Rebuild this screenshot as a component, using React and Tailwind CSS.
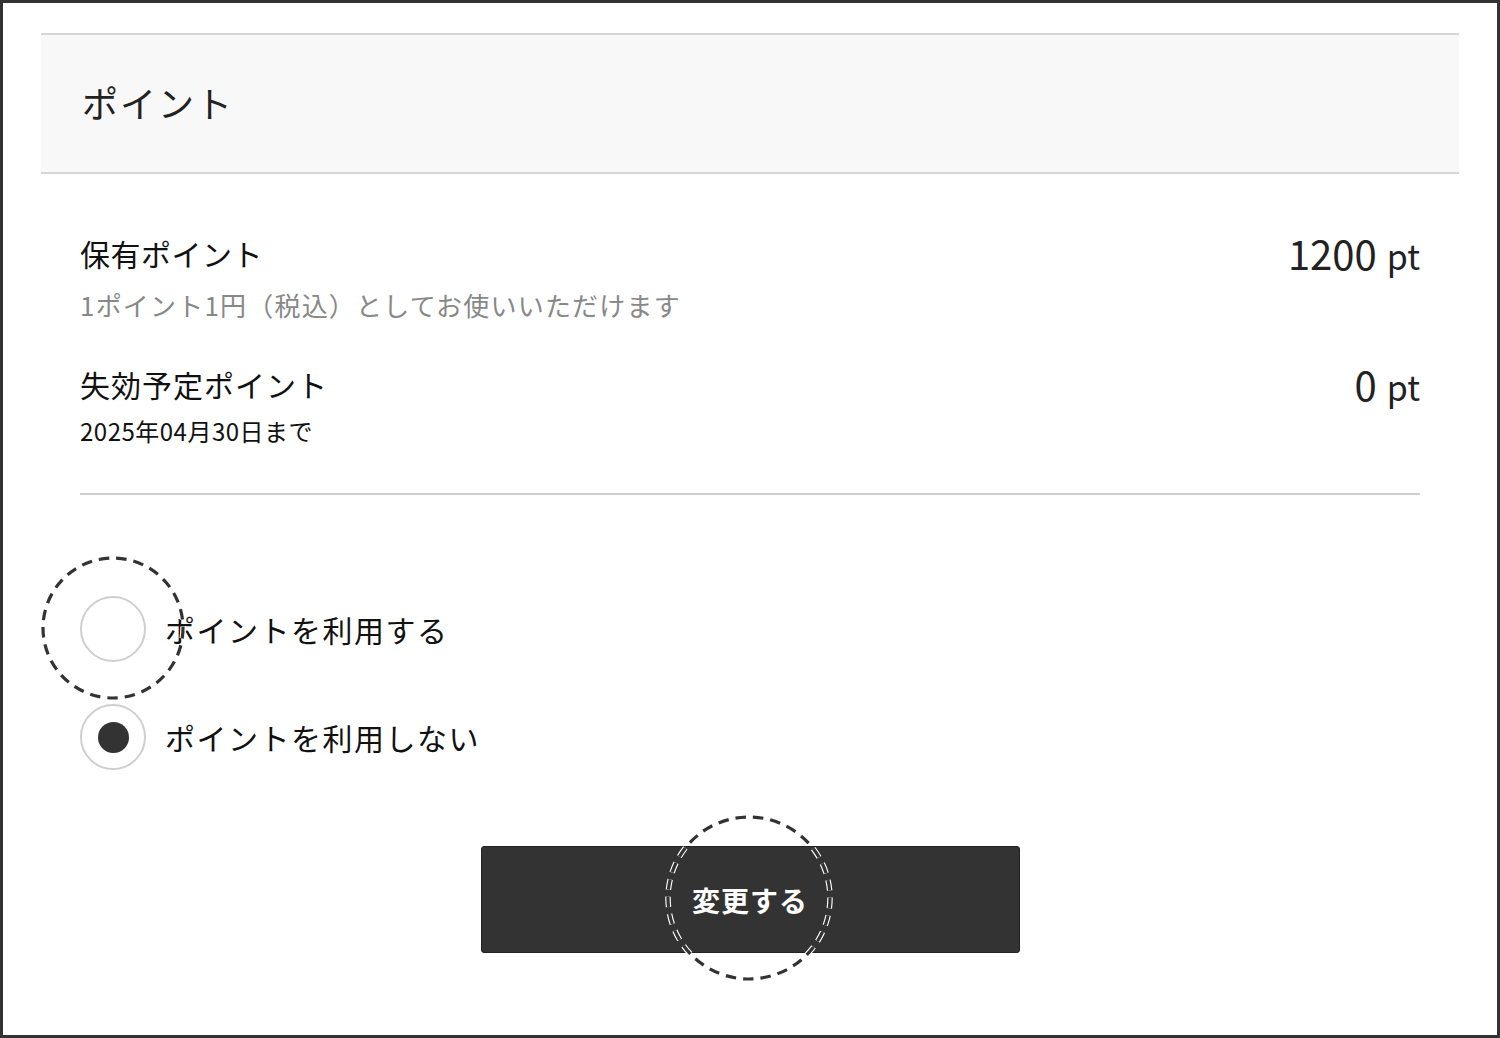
import React from 'react';

function DashedRing({ size, r, className }) {
  const c = size / 2;
  return (
    <svg width={size} height={size} className={className} viewBox={`0 0 ${size} ${size}`}>
      <circle cx={c} cy={c} r={r} fill="none" stroke="#fff" strokeWidth="5.5" strokeDasharray="10.5 7" />
      <circle cx={c} cy={c} r={r} fill="none" stroke="#333" strokeWidth="3.2" strokeDasharray="10.5 7" />
    </svg>
  );
}

function Radio({ checked, label, ring }) {
  return (
    <div className="flex items-center">
      <div className="relative flex h-[66px] w-[66px] items-center justify-center rounded-full border-2 border-[#cfcfcf] bg-white">
        {checked && <span className="h-[31px] w-[31px] rounded-full bg-[#333]" />}
        {ring && <DashedRing size={150} r={70} className="pointer-events-none absolute left-[-44px] top-[-45px]" />}
      </div>
      <span className="ml-[19px] text-[30px] leading-[40px] tracking-[1.5px] text-[#111]">{label}</span>
    </div>
  );
}

export default function App() {
  return (
    <div className="box-border h-[1038px] w-[1500px] border-[3px] border-[#333] bg-white px-[38px] pt-[30px] font-['Noto_Sans_CJK_JP','Noto_Sans',sans-serif] text-[#222]">
      <div className="flex h-[141px] items-center border-y-2 border-[#d6d6d6] bg-[#f8f8f8] pb-[4px] pl-[41px] text-[36px] tracking-[2px]">
        ポイント
      </div>

      <div className="px-[39px]">
        <div className="mt-[55px] flex items-baseline justify-between leading-[40px]">
          <span className="text-[30px] tracking-[0.5px] text-[#111]">保有ポイント</span>
          <span className="translate-y-[4px] text-[40px] text-[#222]">
            1200<span className="ml-[10px] text-[34px]">pt</span>
          </span>
        </div>
        <p className="mt-[12px] text-[26px] leading-[40px] tracking-[1.2px] text-[#888]">
          1ポイント1円（税込）としてお使いいただけます
        </p>

        <div className="mt-[35px] flex items-baseline justify-between leading-[40px]">
          <span className="text-[30px] tracking-[1px] text-[#111]">失効予定ポイント</span>
          <span className="translate-y-[4px] text-[40px] text-[#222]">
            0<span className="ml-[10px] text-[34px]">pt</span>
          </span>
        </div>
        <p className="mt-[11px] text-[24px] leading-[32px] tracking-[0.5px] text-[#111]">2025年04月30日まで</p>

        <div className="mt-[46px] h-[2px] bg-[#d0d0d0]" />

        <div className="mt-[101px] flex flex-col gap-[42px]">
          <Radio label="ポイントを利用する" ring />
          <Radio checked label="ポイントを利用しない" />
        </div>

        <div className="relative mx-auto mt-[76px] w-[539px]">
          <button
            type="button"
            className="flex h-[107px] w-full items-center justify-center rounded-[3px] border border-[#222] bg-[#333] text-[28px] font-bold tracking-[1px] text-white"
          >
            変更する
          </button>
          <DashedRing size={170} r={81} className="pointer-events-none absolute left-[183px] top-[-33px]" />
        </div>
      </div>
    </div>
  );
}
